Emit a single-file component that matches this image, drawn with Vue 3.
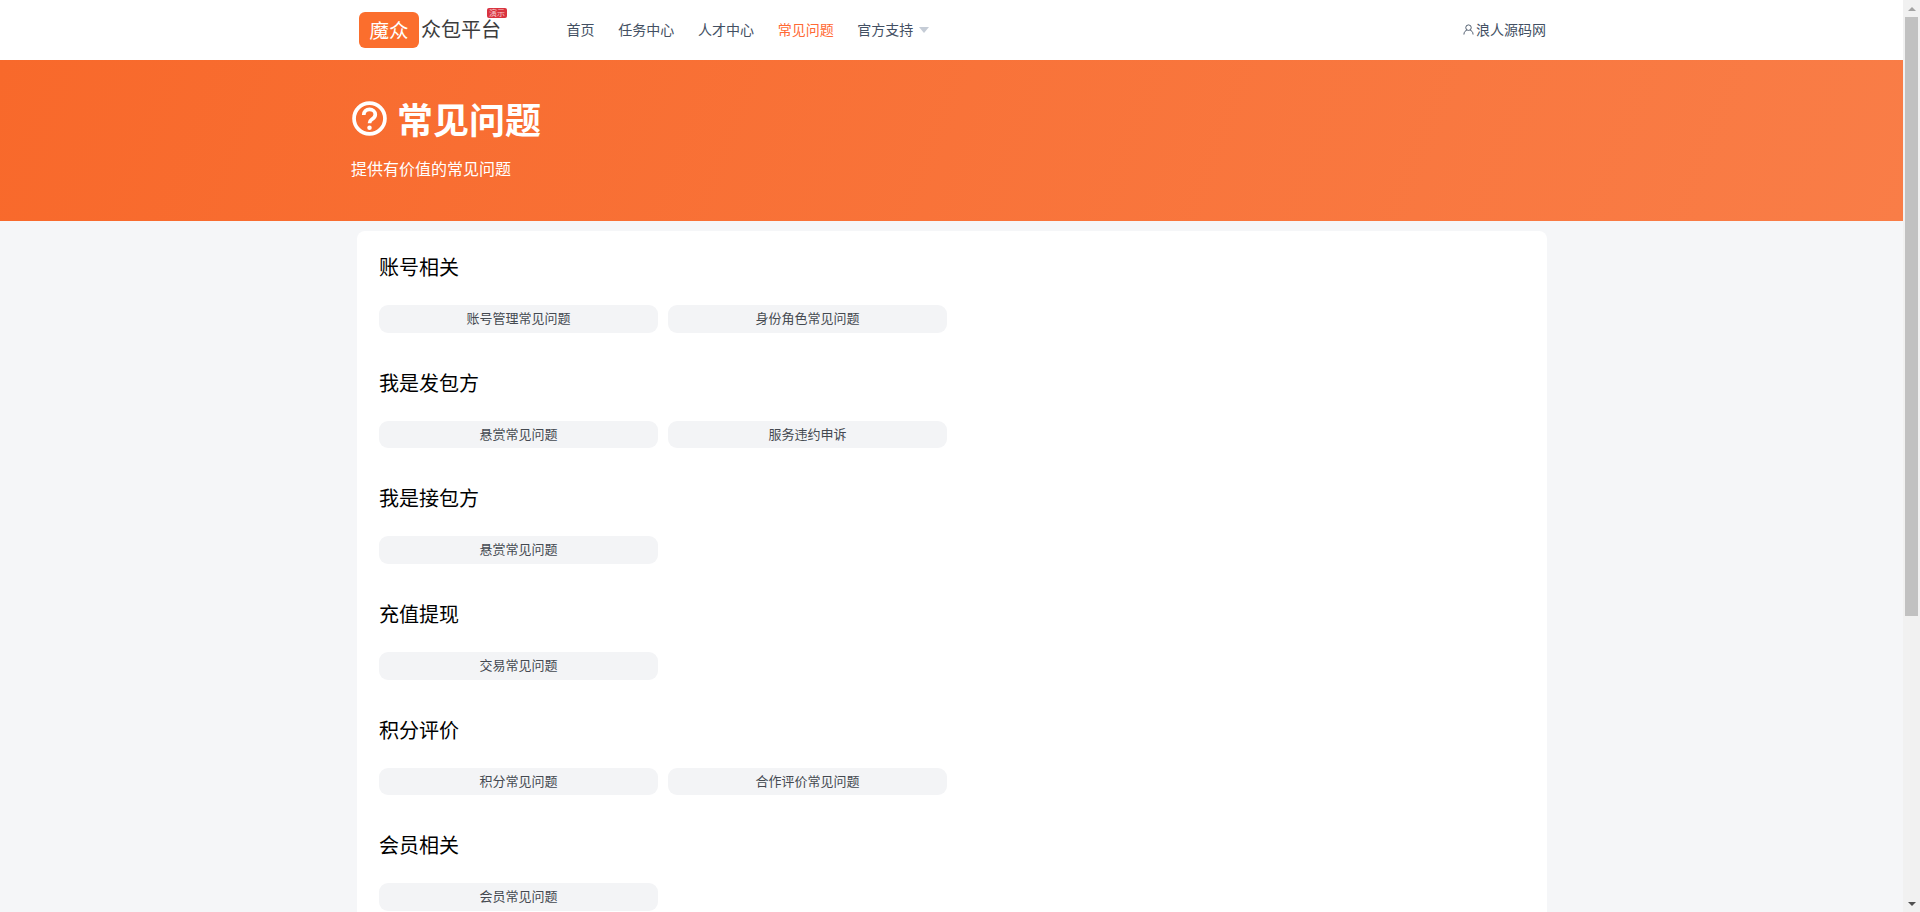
<script setup>
const navItems = [
  { label: '首页' },
  { label: '任务中心' },
  { label: '人才中心' },
  { label: '常见问题', active: true },
  { label: '官方支持', caret: true }
]
const groups = [
  { title: '账号相关', links: ['账号管理常见问题', '身份角色常见问题'] },
  { title: '我是发包方', links: ['悬赏常见问题', '服务违约申诉'] },
  { title: '我是接包方', links: ['悬赏常见问题'] },
  { title: '充值提现', links: ['交易常见问题'] },
  { title: '积分评价', links: ['积分常见问题', '合作评价常见问题'] },
  { title: '会员相关', links: ['会员常见问题'] }
]
</script>

<template>
  <div class="window">
    <div class="page">
      <header class="topbar">
        <div class="brand">
          <span class="logo-mark">魔众</span>
          <span class="logo-text">众包平台</span>
          <span class="demo-badge">演示</span>
        </div>
        <nav class="nav">
          <a v-for="item in navItems" :key="item.label" class="nav-link" :class="{ active: item.active }">
            {{ item.label }}<i v-if="item.caret" class="caret"></i>
          </a>
        </nav>
        <a class="user-link">
          <svg class="user-icon" viewBox="0 0 12 12" fill="none" stroke="#435063" stroke-width="1">
            <circle cx="6" cy="4" r="3" />
            <path d="M1 11.500c0-3 2-4.500 3.200-4.800M11 11.500c0-3-2-4.500-3.200-4.800" />
          </svg>
          <span>浪人源码网</span>
        </a>
      </header>

      <section class="hero">
        <h1 class="hero-title">
          <svg class="hero-icon" viewBox="0 0 34 34" fill="none" stroke="#fff">
            <circle cx="17" cy="17" r="15" stroke-width="3.600" />
            <path d="M11.400 13.600c0-3.200 2.500-5.500 5.600-5.500s5.600 2.100 5.600 5c0 2.200-1.300 3.300-2.800 4.400-1.500 1.100-2.800 2-2.800 4" stroke-width="3.600" />
            <circle cx="17" cy="26" r="2.200" fill="#fff" stroke="none" />
          </svg>
          <span>常见问题</span>
        </h1>
        <p class="hero-sub">提供有价值的常见问题</p>
      </section>

      <main class="card">
        <section v-for="group in groups" :key="group.title" class="group">
          <h2 class="group-title">{{ group.title }}</h2>
          <div class="links">
            <a v-for="link in group.links" :key="link" class="link-btn">{{ link }}</a>
          </div>
        </section>
      </main>
    </div>

    <aside class="scrollbar">
      <div class="arrow up"></div>
      <div class="track"><div class="thumb"></div></div>
      <div class="arrow down"></div>
    </aside>
  </div>
</template>

<style>
html, body { margin: 0; height: 100%; overflow: hidden; }
</style>

<style scoped>
.window {
  display: flex;
  width: 1920px;
  height: 912px;
  overflow: hidden;
  font-family: "Noto Sans CJK SC", "Liberation Sans", sans-serif;
}
.page {
  width: 1903px;
  height: 912px;
  overflow: hidden;
  background: #f5f6f8;
  flex: none;
}
.topbar {
  height: 60px;
  background: #fff;
  display: flex;
  align-items: center;
  padding: 0 357px 0 359px;
  box-sizing: border-box;
}
.brand {
  position: relative;
  width: 207.600px;
  display: flex;
  align-items: center;
  flex: none;
}
.logo-mark {
  width: 60px;
  height: 36px;
  border-radius: 6px;
  background: #fb6e2d;
  color: #fff;
  font-size: 19.500px;
  line-height: 35px;
  text-align: center;
}
.logo-text {
  margin-left: 2px;
  font-size: 20px;
  line-height: 22px;
  margin-top: -2px;
  color: #3c3c3c;
}
.demo-badge {
  position: absolute;
  left: 128px;
  top: -4px;
  width: 20px;
  height: 10px;
  border-radius: 2px;
  background: #d9333f;
  color: #f6c9c9;
  font-size: 8px;
  line-height: 10px;
  text-align: center;
}
.nav {
  display: flex;
  gap: 23.700px;
  flex: 1;
  margin-top: -2px;
}
.nav-link {
  font-size: 14px;
  line-height: 20px;
  color: #435063;
  display: flex;
  align-items: center;
}
.nav-link.active { color: #ff6a35; }
.caret {
  width: 0;
  height: 0;
  margin-left: 6px;
  margin-top: 2px;
  border-left: 5px solid transparent;
  border-right: 5px solid transparent;
  border-top: 6px solid #c5ccd6;
}
.user-link {
  display: flex;
  align-items: center;
  gap: 2px;
  margin-top: -2px;
  font-size: 14px;
  line-height: 20px;
  color: #435063;
}
.user-icon { width: 11px; height: 11px; }
.hero {
  height: 161px;
  box-sizing: border-box;
  padding: 33px 0 0 351px;
  background: linear-gradient(110deg, #f8692b 0%, #f97d47 100%);
  color: #fff;
}
.hero-title {
  margin: 0;
  display: flex;
  align-items: center;
  gap: 10px;
  font-size: 36px;
  font-weight: 700;
  line-height: 50px;
}
.hero-icon {
  width: 35px;
  height: 35px;
  margin-left: 1px;
  margin-top: 1px;
}
.hero-sub {
  margin: 13px 0 0;
  font-size: 16px;
  line-height: 24px;
}
.card {
  width: 1190px;
  margin: 10px 0 0 357px;
  box-sizing: border-box;
  padding: 21px 22px 0;
  border-radius: 8px 8px 0 0;
  background: #fff;
  height: 800px;
}
.group { margin-bottom: 35px; }
.group-title {
  margin: 0 0 23px;
  font-size: 20px;
  font-weight: 400;
  line-height: 30px;
  color: #000;
}
.links {
  display: grid;
  grid-template-columns: repeat(4, 1fr);
  gap: 10px;
}
.link-btn {
  height: 27.670px;
  line-height: 25px;
  border-radius: 9px;
  background: #f3f4f6;
  color: #444950;
  font-size: 13px;
  text-align: center;
}
.scrollbar {
  width: 17px;
  height: 912px;
  flex: none;
  display: flex;
  flex-direction: column;
  background: #f1f1f1;
}
.arrow {
  height: 17px;
  flex: none;
  display: flex;
  align-items: center;
  justify-content: center;
}
.arrow::before {
  content: "";
  width: 0;
  height: 0;
  border-left: 4px solid transparent;
  border-right: 4px solid transparent;
}
.arrow.up::before { border-bottom: 4px solid #a3a3a3; }
.arrow.down::before { border-top: 4px solid #505050; }
.track { flex: 1; padding: 0 2px; }
.thumb { height: 599px; background: #c1c1c1; }
</style>
